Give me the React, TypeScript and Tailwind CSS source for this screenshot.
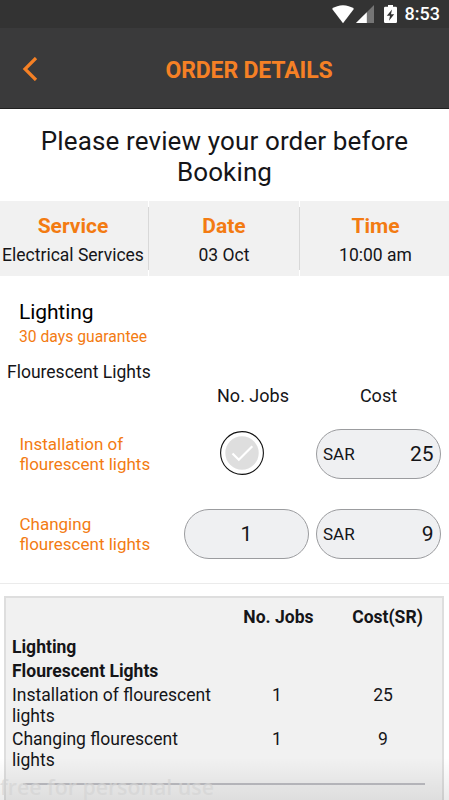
import clsx from 'clsx';

const summary = [
  { label: 'Service', value: 'Electrical Services', width: 'w-[149px]', pad: 'pr-[2px]' },
  { label: 'Date', value: '03 Oct', width: 'w-[151px]', pad: '' },
  { label: 'Time', value: '10:00 am', width: 'w-[149px]', pad: 'pl-[2px]' },
];

const jobs = [
  { title: ['Installation of', 'flourescent lights'], count: null, cost: 25 },
  { title: ['Changing', 'flourescent lights'], count: 1, cost: 9 },
];

const totals = [
  { title: ['Installation of flourescent', 'lights'], count: 1, cost: 25 },
  { title: ['Changing flourescent', 'lights'], count: 1, cost: 9 },
];

function StatusBar() {
  return (
    <div className="flex h-7 items-center justify-end bg-[#333333] pr-[9px] text-white">
      <svg className="h-[19px] w-[22px]" viewBox="0 0 22 19" fill="currentColor">
        <path d="M0 3.8C6.4-1 15.6-1 22 3.8L11 18.2z" />
      </svg>
      <svg className="ml-[2px] h-[18px] w-[18px]" viewBox="0 0 18 18">
        <path d="M0 18L18 0v18z" fill="#757575" />
        <path d="M0 18L10.8 7.2V18z" fill="#fff" />
      </svg>
      <svg className="ml-[10px] h-[18px] w-[13px]" viewBox="0 0 13 18">
        <path d="M4 0h5v1.8h2.8q1.2 0 1.2 1.2v13.8q0 1.2-1.2 1.2H1.2Q0 18 0 16.8V3q0-1.2 1.2-1.2H4z" fill="#fff" />
        <path d="M8 4.5L2.8 10.8H6L5 15.8l5.2-6.6H7z" fill="#333" />
      </svg>
      <span className="ml-2 text-[18px] leading-none font-medium">8:53</span>
    </div>
  );
}

function Header() {
  return (
    <header className="flex h-[81px] items-center border-b border-[#202020] bg-[#3a3a3b] pt-[3px]">
      <button className="-mt-px ml-[22px] w-4 text-[#f58025]" aria-label="Back">
        <svg className="h-6 w-4" viewBox="0 0 16 24" fill="none" stroke="currentColor" strokeWidth="3.2">
          <path d="M14 1L3 12l11 11" />
        </svg>
      </button>
      <h1 className="ml-[11px] flex-1 pt-[2px] text-center text-[23px] leading-none font-bold tracking-[-0.15px] text-[#f58025]">ORDER DETAILS</h1>
    </header>
  );
}

function CostPill({ cost }: { cost: number }) {
  return (
    <div className="ml-[7px] flex h-[50px] w-[125px] items-center justify-between rounded-full border border-[#9b9c9f] bg-[#eff0f2] pr-[6.5px] pl-[6px]">
      <span className="pt-[2px] text-[17px]">SAR</span>
      <span className="pt-[2px] text-[21px]">{cost}</span>
    </div>
  );
}

function CheckButton() {
  return (
    <svg className="h-11 w-11" viewBox="0 0 44 44" fill="none">
      <circle cx="22" cy="22" r="21.4" fill="#fff" stroke="#111" strokeWidth="1.1" />
      <circle cx="22" cy="22" r="16.7" fill="#dedede" />
      <path d="M12.5 22.5l6.3 6.3L32.3 15.3" stroke="#fff" strokeWidth="2.2" />
    </svg>
  );
}

export default function App() {
  return (
    <div className="relative h-[800px] w-[449px] overflow-hidden bg-white font-['Roboto',sans-serif] text-[#151518]">
      <StatusBar />
      <Header />

      <h2 className="h-[92px] pt-[17px] text-center text-[26px] leading-[31px] tracking-[0.13px]">
        Please review your order before
        <br />
        Booking
      </h2>

      <section className="flex h-[75px] bg-[#f1f1f1]">
        {summary.map((item, index) => (
          <div key={item.label} className={clsx('flex', item.width)}>
            <div className={clsx('flex-1 pt-[13px] text-center whitespace-nowrap', item.pad)}>
              <p className="text-[21px] leading-6 font-bold text-[#f37b12]">{item.label}</p>
              <p className="pt-[6px] text-[17.5px] leading-[22px]">{item.value}</p>
            </div>
            {index < 2 && (
              <div className="w-px bg-white py-[6px]">
                <div className="h-full bg-[#d8d8d8]" />
              </div>
            )}
          </div>
        ))}
      </section>

      <section className="h-[308px] border-b border-[#ebebeb] pt-[24px]">
        <h3 className="pl-[19px] text-[21px] leading-6 tracking-[-0.1px] text-black">Lighting</h3>
        <p className="pt-px pl-[19px] text-[15.7px] leading-6 text-[#f37b12]">30 days guarantee</p>
        <p className="pt-[12px] pl-[7px] text-[17.5px] leading-[22px]">Flourescent Lights</p>
        <div className="flex pt-[2px] pl-[184px] text-center text-[18px] leading-[22px]">
          <span className="w-[138px]">No. Jobs</span>
          <span className="w-[113px]">Cost</span>
        </div>
        <div className="flex flex-col gap-[30px] pt-[22px]">
          {jobs.map((job) => (
            <div key={job.title[0]} className="flex h-[50px] items-center">
              <p className="w-[184px] pl-[19.5px] text-[17px] leading-5 text-[#f37b12]">
                {job.title[0]}
                <br />
                {job.title[1]}
              </p>
              {job.count === null ? (
                <div className="flex w-[125px] justify-center pr-[9px] pb-[2px]">
                  <CheckButton />
                </div>
              ) : (
                <div className="flex h-[50px] w-[125px] items-center justify-center rounded-full border border-[#9b9c9f] bg-[#eff0f2] pt-[2px] text-[21px]">
                  {job.count}
                </div>
              )}
              <CostPill cost={job.cost} />
            </div>
          ))}
        </div>
      </section>

      <section className="mt-3 mr-[5px] ml-1 h-[240px] border-2 border-[#dedede] bg-[#f1f1f1] pt-2 text-[17.55px]">
        <div className="flex pl-[218px] text-center leading-[22px] font-bold">
          <span className="w-[109px]">No. Jobs</span>
          <span className="w-[109px]">Cost(SR)</span>
        </div>
        <h4 className="pt-[7px] pl-[6px] leading-6 font-bold">Lighting</h4>
        <h4 className="pl-[6px] leading-6 font-bold">Flourescent Lights</h4>
        <div className="flex flex-col gap-[2px] pt-[2px]">
          {totals.map((row) => (
            <div key={row.title[0]} className="flex leading-[21px]">
              <p className="w-[218px] pl-[6px] whitespace-nowrap">
                {row.title[0]}
                <br />
                {row.title[1]}
              </p>
              <span className="w-[106px] text-center">{row.count}</span>
              <span className="w-[106px] text-center">{row.cost}</span>
            </div>
          ))}
        </div>
        <div className="mt-3 mr-[17px] ml-[17px] h-[2px] bg-[#bdbdc2]" />
      </section>

      <div className="absolute inset-x-0 bottom-0 h-[42px] bg-linear-to-b from-black/0 to-black/8" />
      <p className="absolute bottom-px left-0 font-['Open_Sans',sans-serif] text-[21.3px] leading-6 font-semibold whitespace-nowrap text-[#d4d4d4]/70">
        free for personal use
      </p>
    </div>
  );
}
